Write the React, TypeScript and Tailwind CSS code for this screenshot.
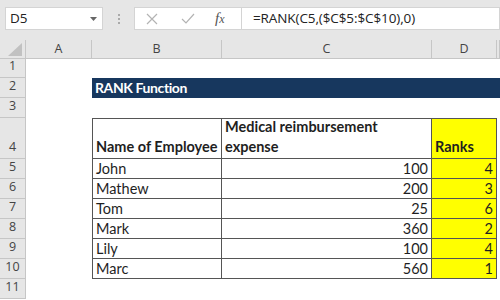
import React from 'react';

const cols = ['A', 'B', 'C', 'D', ''];
const data = [
  { name: 'John', amount: 100, rank: 4 },
  { name: 'Mathew', amount: 200, rank: 3 },
  { name: 'Tom', amount: 25, rank: 6 },
  { name: 'Mark', amount: 360, rank: 2 },
  { name: 'Lily', amount: 100, rank: 4 },
  { name: 'Marc', amount: 560, rank: 1 },
];

const cellFont = "font-['Lato','Liberation_Sans',sans-serif] text-[14.5px] text-[#1f1f1f]";
const uiFont = "font-['Open_Sans','Noto_Sans',sans-serif]";

function RowHead({ n }: { n: number | string }) {
  return (
    <div
      className={`${uiFont} flex items-end justify-center pb-[1px] bg-[#e6e6e6] border-r border-b border-[#c6c6c6] text-[12.5px] text-[#444]`}
    >
      {n}
    </div>
  );
}

export default function App() {
  return (
    <div className="w-[500px] h-[300px] overflow-hidden bg-white select-none">
      {/* formula bar */}
      <div className="h-[40px] bg-[#e6e6e6] flex items-start pt-[7px] pl-[5px]">
        <div className="w-[98px] h-[23px] bg-white border border-[#d4d4d4] flex items-center justify-between pl-[4px] pr-[5px]">
          <span className={`${uiFont} text-[13.5px] text-[#222]`}>D5</span>
          <svg width="7" height="4" viewBox="0 0 7 4">
            <path d="M0 0h7L3.5 4z" fill="#666" />
          </svg>
        </div>
        <div className="w-[31px] h-[23px] flex flex-col items-center justify-center gap-[2px]">
          <span className="w-[2px] h-[2px] bg-[#aaa]" />
          <span className="w-[2px] h-[2px] bg-[#aaa]" />
          <span className="w-[2px] h-[2px] bg-[#aaa]" />
        </div>
        <div className="w-[107px] h-[23px] bg-white border border-[#d4d4d4] border-r-0 flex items-center">
          <svg className="ml-[11px]" width="12" height="12" viewBox="0 0 12 12">
            <path d="M1 1l10 10M11 1L1 11" stroke="#b3b3b3" strokeWidth="1.2" />
          </svg>
          <svg className="ml-[23px]" width="14" height="11" viewBox="0 0 14 11">
            <path d="M1 6l4 4L13 1" stroke="#b3b3b3" strokeWidth="1.2" fill="none" />
          </svg>
          <span className="ml-[20px] font-['Liberation_Serif',serif] italic text-[15px] text-[#555] leading-none">
            f<span className="text-[12px]">x</span>
          </span>
        </div>
        <div className="flex-1 h-[23px] bg-white border border-[#d4d4d4] flex items-center pl-[11px]">
          <span className={`${uiFont} text-[13.5px] text-[#222] tracking-[-0.1px]`}>
            =RANK(C5,($C$5:$C$10),0)
          </span>
        </div>
      </div>

      {/* sheet */}
      <div className="grid grid-cols-[26px_66px_130px_210px_65px_1fr] grid-rows-[19px_19px_20px_20px_41px_repeat(7,20px)]">
        {/* column headers */}
        <div className="bg-[#e6e6e6] border-r border-b border-[#c6c6c6] flex items-end justify-end pr-[3px] pb-[2px]">
          <svg width="14" height="13" viewBox="0 0 14 13">
            <path d="M14 0v13H0z" fill="#c1c1c1" />
          </svg>
        </div>
        {cols.map((c, i) => (
          <div
            key={i}
            className={`${uiFont} bg-[#e6e6e6] border-r border-b border-[#c6c6c6] flex items-center justify-center text-[12.5px] text-[#444]`}
          >
            {c}
          </div>
        ))}

        {/* row 1 */}
        <RowHead n={1} />
        <div className="col-span-5" />

        {/* row 2 */}
        <RowHead n={2} />
        <div />
        <div className="col-span-4 bg-[#17375e] flex items-end pl-[3px] pb-[1px]">
          <span className="font-['Lato','Liberation_Sans',sans-serif] font-bold text-[14px] tracking-[-0.4px] text-white leading-[18px]">
            RANK Function
          </span>
        </div>

        {/* row 3 */}
        <RowHead n={3} />
        <div className="col-span-5" />

        {/* row 4 header */}
        <RowHead n={4} />
        <div />
        <div className={`${cellFont} font-bold border border-[#555] flex items-end pl-[3px] pb-[1px] leading-[20px]`}>
          Name of Employee
        </div>
        <div className={`${cellFont} font-bold border-t border-r border-b border-[#555] flex items-end pl-[3px] pb-[1px] leading-[20px]`}>
          Medical reimbursement
          <br />
          expense
        </div>
        <div className={`${cellFont} font-bold bg-[#ffff00] border-t border-r border-b border-[#555] flex items-end pl-[3px] pb-[1px] leading-[20px]`}>
          Ranks
        </div>
        <div />

        {data.map((r, i) => (
          <React.Fragment key={i}>
            <RowHead n={i + 5} />
            <div />
            <div className={`${cellFont} border-l border-r border-b border-[#555] flex items-end pl-[3px] leading-[19px]`}>
              {r.name}
            </div>
            <div className={`${cellFont} border-r border-b border-[#555] flex items-end justify-end pr-[3px] leading-[19px]`}>
              {r.amount}
            </div>
            <div className={`${cellFont} bg-[#ffff00] border-r border-b border-[#555] flex items-end justify-end pr-[3px] leading-[19px]`}>
              {r.rank}
            </div>
            <div />
          </React.Fragment>
        ))}

        {/* row 11 */}
        <RowHead n={11} />
        <div className="col-span-5" />
      </div>
    </div>
  );
}
